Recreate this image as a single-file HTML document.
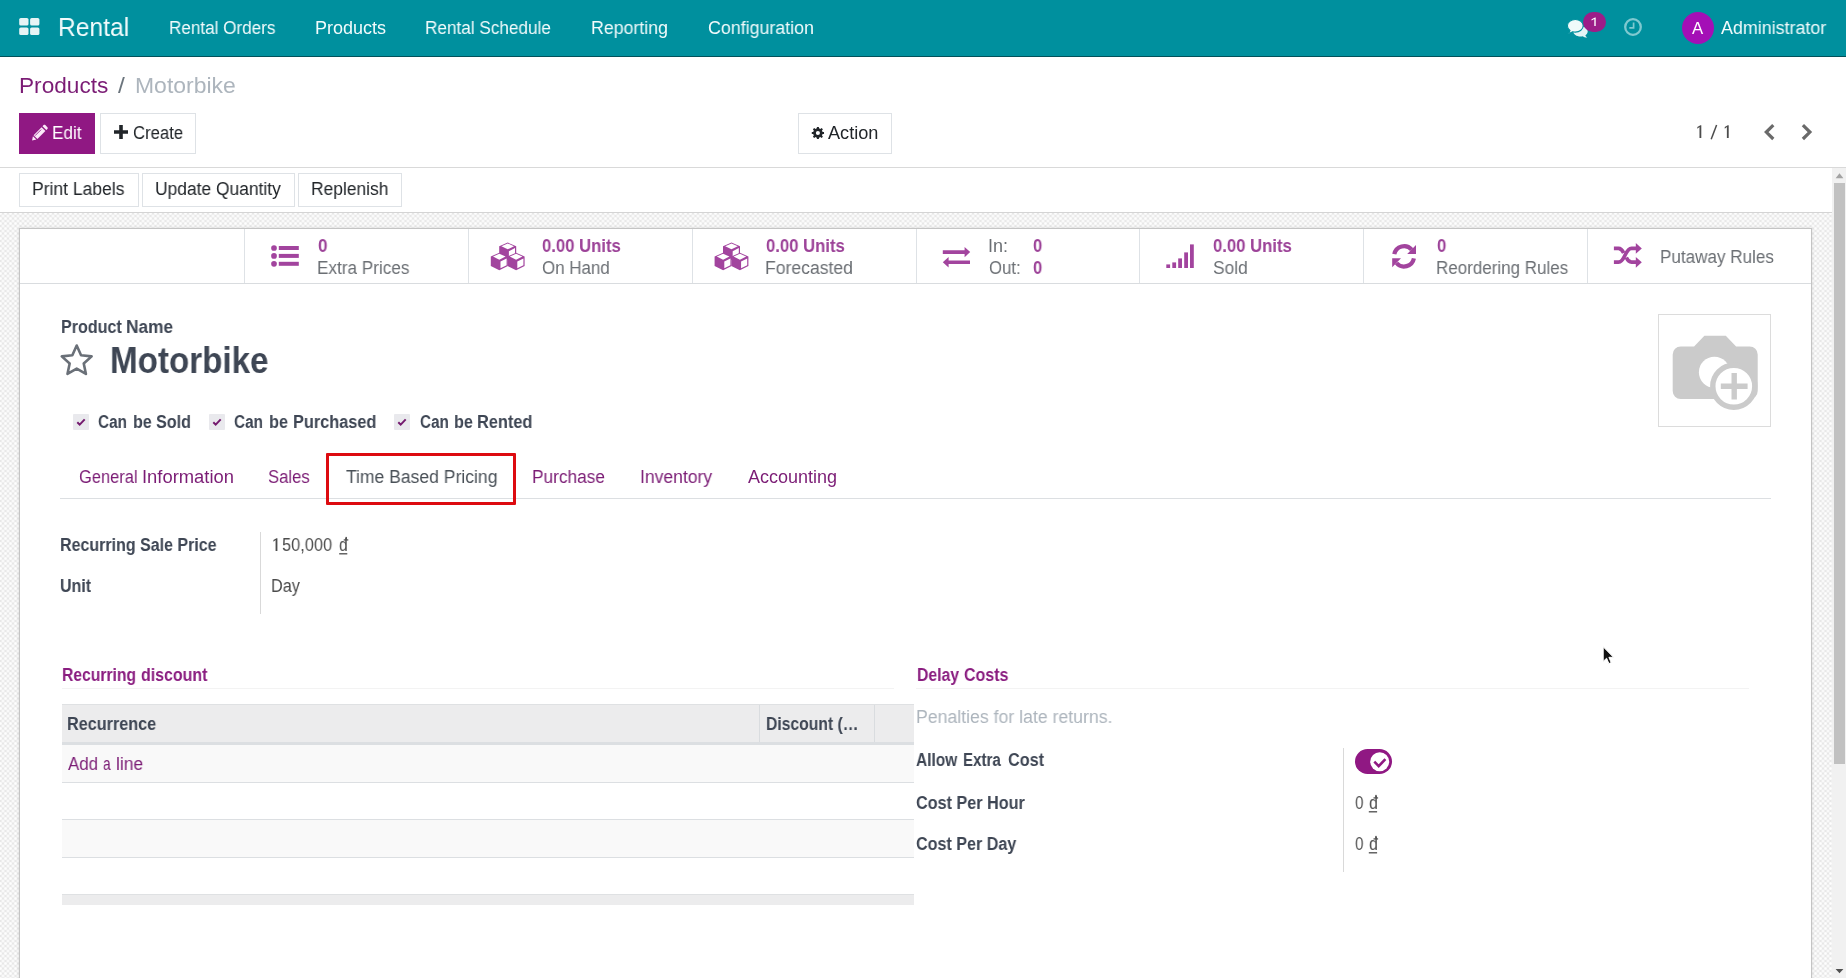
<!DOCTYPE html>
<html>
<head>
<meta charset="utf-8">
<title>Motorbike - Rental</title>
<style>
*{box-sizing:border-box;margin:0;padding:0}
html,body{width:1846px;height:978px;overflow:hidden;background:#fff}
body{font-family:"Liberation Sans",sans-serif;position:relative;font-size:18px;color:#4c4c4c}
.x{position:absolute;white-space:nowrap;line-height:1;transform-origin:0 0;will-change:transform}
.b{position:absolute}
svg{position:absolute;overflow:visible}
#nav{left:0;top:0;width:1846px;height:57px;background:#00909e;border-bottom:1px solid #01525b}
#cpb{left:0;top:167px;width:1846px;height:1px;background:#d9d9d9}
#sbb{left:0;top:212px;width:1832px;height:1px;background:#d4d4d4}
#bg{left:0;top:213px;width:1832px;height:765px;background-color:#e7e7e7;
background-image:radial-gradient(circle,#fefefe 0.8px,rgba(254,254,254,0) 2.1px),radial-gradient(circle,#fefefe 0.8px,rgba(254,254,254,0) 2.1px);
background-size:5px 5px;background-position:0.5px 0.5px,3px 3px}
#sheet{left:19px;top:228px;width:1793px;height:760px;background:#fff;border:1px solid #c4c4c4;box-shadow:0 0 3px rgba(0,0,0,.12)}
#scr{left:1832px;top:168px;width:14px;height:810px;background:#f1f1f1}
#scr i{position:absolute;left:2px;top:15px;width:11px;height:581px;background:#c1c1c1}
.btn{border:1px solid #dee2e6;background:#fff}
.hl{height:1px;background:#dee2e6}
.vl{width:1px;background:#dee2e6}
.cb{width:16px;height:16px;background:#e9e9ed;border-radius:1px}
.x u{text-decoration:underline;text-underline-offset:2px}
</style>
</head>
<body>
<div class="b" id="nav"></div>
<svg style="left:19px;top:18px" width="21" height="17" viewBox="0 0 21 17"><g fill="#e6f4f5"><rect x=".2" y="0" width="9.3" height="7.6" rx="1.6"/><rect x="11.1" y="0" width="9.3" height="7.6" rx="1.6"/><rect x=".2" y="9.4" width="9.3" height="7.6" rx="1.6"/><rect x="11.1" y="9.4" width="9.3" height="7.6" rx="1.6"/></g></svg>
<svg style="left:1566px;top:18px" width="24" height="20" viewBox="0 0 24 20"><g fill="#e3f5f6"><path d="M14.5 8.5c4 0 7.2 2.1 7.2 5 0 1.500-.9 2.8-2.300 3.700.2.900.9 1.800 1.900 2.300-1.900.1-3.500-.4-4.600-1.300-.7.1-1.400.2-2.200.2-4 0-7.200-2.200-7.200-5s3.200-4.900 7.200-4.900z"/></g><g fill="#f0fafa" stroke="#00909e" stroke-width="1.1"><path d="M9.300 1.500c4.400 0 7.900 2.800 7.900 6.300s-3.500 6.300-7.900 6.300c-.9 0-1.700-.1-2.500-.3-1.300 1-3 1.600-5.100 1.500 1.200-.7 2-1.700 2.300-2.800C2.400 11.400 1.400 9.700 1.400 7.800c0-3.500 3.500-6.300 7.900-6.300z"/></g></svg>
<div class="b" style="left:1583.400px;top:12px;width:22.300px;height:19.800px;border-radius:10px;background:#9c1d88"></div>
<svg style="left:1623px;top:17px" width="20" height="20" viewBox="0 0 20 20"><circle cx="10" cy="10" r="7.800" fill="none" stroke="#7fc9d0" stroke-width="2.300"/><path d="M10.600 5.500v5.400h-4.300" fill="none" stroke="#7fc9d0" stroke-width="1.700"/></svg>
<div class="b" style="left:1682px;top:12px;width:32px;height:32px;border-radius:50%;background:#a40fb6"></div>
<div class="b" id="cpb"></div>
<div class="b" style="left:19px;top:113px;width:76px;height:41px;background:#901883"></div>
<svg style="left:31.800px;top:125px" width="15.800" height="15.800" viewBox="0 0 17 17"><g fill="#fbe9f8"><path d="M11.300 1.300l1.200-1.200c.5-.5 1.300-.5 1.800 0l2.300 2.300c.5.500.5 1.300 0 1.800l-1.200 1.200z"/><path d="M10.300 2.300l4.100 4.100-8.600 8.600-4.100-4.100z"/><path d="M1 12l3.700 3.700-4.600 1z"/></g><path d="M3.300 11.500l6.600-6.600" stroke="#901883" stroke-width=".9" fill="none"/></svg>
<div class="b btn" style="left:100px;top:113px;width:96px;height:41px"></div>
<svg style="left:113.600px;top:125.200px" width="14" height="14" viewBox="0 0 14 14"><path d="M5.200 0h3.600v5.200H14v3.600H8.800V14H5.200V8.800H0V5.200h5.200z" fill="#212529"/></svg>
<div class="b btn" style="left:798px;top:113px;width:94px;height:41px"></div>
<svg style="left:0;top:0" width="1846" height="200" viewBox="0 0 1846 200"><path d="M824.02 132.03 L824.02 133.97 L822.57 134.12 L821.99 135.51 L822.92 136.64 L821.54 138.02 L820.41 137.09 L819.02 137.67 L818.87 139.12 L816.93 139.12 L816.78 137.67 L815.39 137.09 L814.26 138.02 L812.88 136.64 L813.81 135.51 L813.23 134.12 L811.78 133.97 L811.78 132.03 L813.23 131.88 L813.81 130.49 L812.88 129.36 L814.26 127.98 L815.39 128.91 L816.78 128.33 L816.93 126.88 L818.87 126.88 L819.02 128.33 L820.41 128.91 L821.54 127.98 L822.92 129.36 L821.99 130.49 L822.57 131.88Z M819.95 133.00 A2.05 2.05 0 1 0 815.85 133.00 A2.05 2.05 0 1 0 819.95 133.00Z" fill="#212529" fill-rule="evenodd"/></svg>
<svg style="left:1760px;top:120px" width="60" height="24" viewBox="1760 120 60 24"><g fill="none" stroke="#6a6a6a" stroke-width="3.200"><path d="M1773.300 125.200l-7 6.900 7 6.900"/><path d="M1802.900 125.200l7 6.900-7 6.900"/></g></svg>
<svg style="left:0;top:0" width="1846" height="160" viewBox="0 0 1846 160"><path d="M1701.30 138.00V125.20h-0.91l-3.05 1.900v1.57l2.14-1.550V138.00z" fill="#4c4c4c"/><path d="M1728.70 138.00V125.20h-0.91l-3.05 1.900v1.57l2.14-1.550V138.00z" fill="#4c4c4c"/><path d="M1711.200 139.300l5.400-14.400" stroke="#4c4c4c" stroke-width="1.500" fill="none"/><path d="M1595.70 26.00V17.40h-0.69l-3.45 1.900v1.19l2.76-1.550V26.00z" fill="#fff"/></svg>
<div class="b btn" style="left:19px;top:173px;width:120px;height:34px"></div>
<div class="b btn" style="left:142px;top:173px;width:153px;height:34px"></div>
<div class="b btn" style="left:298px;top:173px;width:104px;height:34px"></div>
<div class="b" id="sbb"></div>
<div class="b" id="bg"></div>
<div class="b" id="sheet"></div>
<div class="b" id="scr"><i></i></div>
<svg style="left:1832px;top:168px" width="14" height="810" viewBox="0 0 14 810"><path d="M3.600 10.300L7.500 5.200l3.900 5.100z" fill="#a3a3a3"/><path d="M3.600 801L7.500 805.200l3.900-4.200z" fill="#505050"/></svg>
<div class="b hl" style="left:20px;top:283px;width:1791px;background:#d9dcdf"></div>
<div class="b vl" style="left:244px;top:229px;height:54px"></div>
<div class="b vl" style="left:468px;top:229px;height:54px"></div>
<div class="b vl" style="left:692px;top:229px;height:54px"></div>
<div class="b vl" style="left:916px;top:229px;height:54px"></div>
<div class="b vl" style="left:1139px;top:229px;height:54px"></div>
<div class="b vl" style="left:1363px;top:229px;height:54px"></div>
<div class="b vl" style="left:1587px;top:229px;height:54px"></div>
<svg style="left:0;top:0" width="1846" height="300" viewBox="0 0 1846 300"><g fill="#a2449e"><circle cx="274" cy="248" r="2.850"/><rect x="278.800" y="246.0" width="20" height="4"/><circle cx="274" cy="255.9" r="2.850"/><rect x="278.800" y="253.9" width="20" height="4"/><circle cx="274" cy="263.8" r="2.850"/><rect x="278.800" y="261.8" width="20" height="4"/><path d="M507.70 242.50L516.20 246.15L516.20 255.65L507.70 259.90L499.20 255.65L499.20 246.15Z"/><path d="M507.70 243.49L513.99 246.19L507.70 249.35L501.41 246.19Z" fill="#fff"/><path d="M515.01 248.08L515.01 254.91L508.89 257.98L508.89 251.15Z" fill="#fff"/><path d="M499.30 252.80L507.80 256.45L507.80 265.95L499.30 270.20L490.80 265.95L490.80 256.45Z"/><path d="M499.30 253.79L505.59 256.49L499.30 259.65L493.01 256.49Z" fill="#fff"/><path d="M506.61 258.38L506.61 265.21L500.49 268.28L500.49 261.45Z" fill="#fff"/><path d="M516.10 252.80L524.60 256.45L524.60 265.95L516.10 270.20L507.60 265.95L507.60 256.45Z"/><path d="M516.10 253.79L522.39 256.49L516.10 259.65L509.81 256.49Z" fill="#fff"/><path d="M523.41 258.38L523.41 265.21L517.29 268.28L517.29 261.45Z" fill="#fff"/><path d="M731.50 242.50L740.00 246.15L740.00 255.65L731.50 259.90L723.00 255.65L723.00 246.15Z"/><path d="M731.50 243.49L737.79 246.19L731.50 249.35L725.21 246.19Z" fill="#fff"/><path d="M738.81 248.08L738.81 254.91L732.69 257.98L732.69 251.15Z" fill="#fff"/><path d="M723.10 252.80L731.60 256.45L731.60 265.95L723.10 270.20L714.60 265.95L714.60 256.45Z"/><path d="M723.10 253.79L729.39 256.49L723.10 259.65L716.81 256.49Z" fill="#fff"/><path d="M730.41 258.38L730.41 265.21L724.29 268.28L724.29 261.45Z" fill="#fff"/><path d="M739.90 252.80L748.40 256.45L748.40 265.95L739.90 270.20L731.40 265.95L731.40 256.45Z"/><path d="M739.90 253.79L746.19 256.49L739.90 259.65L733.61 256.49Z" fill="#fff"/><path d="M747.21 258.38L747.21 265.21L741.09 268.28L741.09 261.45Z" fill="#fff"/><path d="M942.800 250.200h21.800v-3.200l5.600 5.100-5.600 5.100v-3.300h-21.800z"/><path d="M970 260.400h-21.400v-3.300l-5.800 5.200 5.800 5.200v-3.400h21.400z"/><rect x="1166.3" y="264.4" width="3.800" height="3.6"/><rect x="1172.3" y="262.4" width="3.800" height="5.6"/><rect x="1178.2" y="258.4" width="3.800" height="9.6"/><rect x="1184.2" y="252.4" width="3.800" height="15.6"/><rect x="1190" y="244.4" width="3.800" height="23.6"/><g fill="none" stroke="#a2449e" stroke-width="4.200"><path d="M1394.300 254.200a10 10 0 0 1 17.400-4.600"/><path d="M1413.900 258.400a10 10 0 0 1-17.400 4.600"/></g><path d="M1416 245.100v9h-8.800z"/><path d="M1392.200 267.300v-9h8.800z"/><g fill="none" stroke="#a2449e" stroke-width="3.700"><path d="M1613.900 262.200h4.600c6.500 0 6.500-13.900 13-13.900h4.900"/><path d="M1613.900 248.300h4.600c2.600 0 4.100 2.200 5.200 4.600M1626.300 257.600c1.100 2.400 2.600 4.600 5.200 4.600h4.900"/></g><path d="M1635.800 243v10.800l6-5.400z"/><path d="M1635.800 256.900v10.800l6-5.400z"/></g></svg>
<svg style="left:0;top:300px" width="200" height="100" viewBox="0 300 200 100"><path d="M76.70 345.50L81.05 355.21L91.63 356.35L83.74 363.49L85.93 373.90L76.70 368.60L67.47 373.90L69.66 363.49L61.77 356.35L72.35 355.21Z" fill="none" stroke="#6a7078" stroke-width="2.600" stroke-linejoin="round"/></svg>
<div class="b" style="left:1658px;top:314px;width:113px;height:113px;border:1px solid #dcdcdc;background:#fff"></div>
<svg style="left:1658px;top:314px" width="113" height="113" viewBox="1658 314 113 113"><g fill="#cbcbcb"><path d="M1704.400 335.800h21.400l10.300 10.700h13.600a8 8 0 0 1 8 8v36.500a8 8 0 0 1-8 8h-69a8 8 0 0 1-8-8v-36.500a8 8 0 0 1 8-8h13.400z"/></g><circle cx="1714.400" cy="372.200" r="15.500" fill="#fff"/><circle cx="1733.800" cy="386.300" r="21" fill="#fff" stroke="#cbcbcb" stroke-width="5.400"/><path d="M1720.800 386.300h26.800M1734.200 373v26.600" stroke="#cbcbcb" stroke-width="5.400" fill="none"/></svg>
<div class="b cb" style="left:73px;top:414px"></div>
<svg style="left:73px;top:414px" width="16" height="16" viewBox="0 0 16 16"><path d="M4.300 8.200l2.400 2.400 5-5.200" fill="none" stroke="#751b6f" stroke-width="2"/></svg>
<div class="b cb" style="left:209px;top:414px"></div>
<svg style="left:209px;top:414px" width="16" height="16" viewBox="0 0 16 16"><path d="M4.300 8.200l2.400 2.400 5-5.200" fill="none" stroke="#751b6f" stroke-width="2"/></svg>
<div class="b cb" style="left:394.3px;top:414px"></div>
<svg style="left:394.3px;top:414px" width="16" height="16" viewBox="0 0 16 16"><path d="M4.300 8.200l2.400 2.400 5-5.200" fill="none" stroke="#751b6f" stroke-width="2"/></svg>
<div class="b hl" style="left:60px;top:498px;width:1711px;background:#dcdfe2"></div>
<div class="b" style="left:325.900px;top:453.300px;width:189.900px;height:51.700px;border:3px solid #dd0b10;border-radius:1px;background:transparent"></div>
<div class="b vl" style="left:260px;top:532px;height:82px;background:#d9d9d9"></div>
<div class="b vl" style="left:1343px;top:748px;height:124px;background:#d9d9d9"></div>
<div class="b hl" style="left:62px;top:688px;width:832px;background:#f3f3f3"></div>
<div class="b hl" style="left:916px;top:688px;width:833px;background:#f3f3f3"></div>
<div class="b" style="left:62px;top:704px;width:852px;height:38px;background:#ececed;border-top:1px solid #dfe1e3"></div>
<div class="b" style="left:62px;top:742px;width:852px;height:3px;background:#dcdfe2"></div>
<div class="b vl" style="left:759px;top:705px;height:37px;background:#d9dcdf"></div>
<div class="b vl" style="left:874px;top:705px;height:37px;background:#d9dcdf"></div>
<div class="b" style="left:62px;top:745px;width:852px;height:37px;background:#f9f9f9"></div>
<div class="b" style="left:62px;top:820px;width:852px;height:37px;background:#f9f9f9"></div>
<div class="b hl" style="left:62px;top:782px;width:852px;background:#dcdfe2"></div>
<div class="b hl" style="left:62px;top:819px;width:852px;background:#dcdfe2"></div>
<div class="b hl" style="left:62px;top:857px;width:852px;background:#dcdfe2"></div>
<div class="b" style="left:62px;top:894px;width:852px;height:11px;background:#ececed;border-top:1px solid #dfe1e3"></div>
<div class="b" style="left:1354.800px;top:748.800px;width:37.400px;height:25.200px;border-radius:13px;background:#901883"></div>
<svg style="left:1354.800px;top:748.800px" width="38" height="26" viewBox="0 0 38 26"><circle cx="24.700" cy="12.700" r="9.500" fill="#fff"/><path d="M19.300 12.700l4.400 4.400 6.700-6.900" fill="none" stroke="#901883" stroke-width="2.600"/></svg>
<svg style="left:0;top:0" width="1846" height="978" viewBox="0 0 1846 978"><path d="M277.40 551.00V538.20h-0.91l-3.05 1.900v1.57l2.14-1.550V551.00z" fill="#4c4c4c"/><rect x="345.45" y="536.90" width="1.450" height="2.600" fill="#4c4c4c"/><rect x="343.70" y="539.30" width="4.600" height="1.250" fill="#4c4c4c"/><rect x="339.20" y="553.15" width="8.10" height="1.300" fill="#4c4c4c"/><rect x="1375.25" y="794.90" width="1.450" height="2.600" fill="#4c4c4c"/><rect x="1373.50" y="797.30" width="4.600" height="1.250" fill="#4c4c4c"/><rect x="1368.80" y="811.15" width="8.30" height="1.300" fill="#4c4c4c"/><rect x="1375.25" y="835.90" width="1.450" height="2.600" fill="#4c4c4c"/><rect x="1373.50" y="838.30" width="4.600" height="1.250" fill="#4c4c4c"/><rect x="1368.80" y="852.15" width="8.30" height="1.300" fill="#4c4c4c"/></svg>
<svg style="left:1602px;top:646px" width="14" height="20" viewBox="0 0 14 20"><path d="M1.200 .8v14.600l3.400-3.200 2.300 5.400 2.300-1-2.300-5.300h4.600z" fill="#111" stroke="#fff" stroke-width="1"/></svg>
<!-- text layer -->
<div class="x" id="brand" style="left:57.91px;top:14px;font-size:26px;color:#f2fbfc;transform:scaleX(0.9464)">Rental</div>
<div class="x" id="m1" style="left:168.55px;top:19px;font-size:18px;color:#f2fbfc;transform:scaleX(0.9501)">Rental Orders</div>
<div class="x" id="m2" style="left:314.50px;top:19px;font-size:18px;color:#f2fbfc;transform:scaleX(0.9995)">Products</div>
<div class="x" id="m3" style="left:425.05px;top:19px;font-size:18px;color:#f2fbfc;transform:scaleX(0.9536)">Rental Schedule</div>
<div class="x" id="m4" style="left:591.01px;top:19px;font-size:18px;color:#f2fbfc;transform:scaleX(0.9864)">Reporting</div>
<div class="x" id="m5" style="left:707.50px;top:19px;font-size:18px;color:#f2fbfc;transform:scaleX(0.99)">Configuration</div>
<div class="x" id="avA" style="left:1692.10px;top:21px;font-size:16px;color:#fff;transform:scaleX(1.0455)">A</div>
<div class="x" id="admin" style="left:1721.00px;top:19px;font-size:18px;color:#f2fbfc;transform:scaleX(0.993)">Administrator</div>
<div class="x" id="bc1" style="left:19.07px;top:75px;font-size:22px;color:#7b1c75;transform:scaleX(1.0289)">Products</div>
<div class="x" id="bc2" style="left:117.90px;top:75px;font-size:22px;color:#6c757d;transform:scaleX(1.1143)">/</div>
<div class="x" id="bc3" style="left:134.76px;top:75px;font-size:22px;color:#adb5bd;transform:scaleX(1.0434)">Motorbike</div>
<div class="x" id="bEdit" style="left:51.65px;top:124px;font-size:18px;color:#fff;transform:scaleX(0.9528)">Edit</div>
<div class="x" id="bCreate" style="left:132.50px;top:124px;font-size:18px;color:#212529;transform:scaleX(0.9275)">Create</div>
<div class="x" id="bAction" style="left:828.10px;top:124px;font-size:18px;color:#212529;transform:scaleX(1.0078)">Action</div>
<div class="x" id="bPrint" style="left:32.13px;top:180px;font-size:18px;color:#212529;transform:scaleX(0.9728)">Print Labels</div>
<div class="x" id="bUpd" style="left:155.23px;top:180px;font-size:18px;color:#212529;transform:scaleX(0.9676)">Update Quantity</div>
<div class="x" id="bRep" style="left:311.23px;top:180px;font-size:18px;color:#212529;transform:scaleX(0.9675)">Replenish</div>
<div class="x" id="s1v" style="left:317.50px;top:237px;font-size:18px;color:#9c4298;font-weight:bold;transform:scaleX(0.95)">0</div>
<div class="x" id="s1l" style="left:316.55px;top:259px;font-size:18px;color:#6b6f74;transform:scaleX(0.9529)">Extra Prices</div>
<div class="x" id="s2v" style="left:541.50px;top:237px;font-size:18px;color:#9c4298;font-weight:bold;transform:scaleX(0.9268)">0.00 Units</div>
<div class="x" id="s2l" style="left:541.50px;top:259px;font-size:18px;color:#6b6f74;transform:scaleX(0.9404)">On Hand</div>
<div class="x" id="s3v" style="left:765.50px;top:237px;font-size:18px;color:#9c4298;font-weight:bold;transform:scaleX(0.9268)">0.00 Units</div>
<div class="x" id="s3l" style="left:764.52px;top:259px;font-size:18px;color:#6b6f74;transform:scaleX(0.9769)">Forecasted</div>
<div class="x" id="s4a" style="left:988.32px;top:237px;font-size:18px;color:#6b6f74;transform:scaleX(0.9827)">In:</div>
<div class="x" id="s4av" style="left:1033.30px;top:237px;font-size:18px;color:#9c4298;font-weight:bold;transform:scaleX(0.92)">0</div>
<div class="x" id="s4b" style="left:989.30px;top:259px;font-size:18px;color:#6b6f74;transform:scaleX(0.9299)">Out:</div>
<div class="x" id="s4bv" style="left:1033.30px;top:259px;font-size:18px;color:#9c4298;font-weight:bold;transform:scaleX(0.92)">0</div>
<div class="x" id="s5v" style="left:1212.50px;top:237px;font-size:18px;color:#9c4298;font-weight:bold;transform:scaleX(0.9268)">0.00 Units</div>
<div class="x" id="s5l" style="left:1212.50px;top:259px;font-size:18px;color:#6b6f74;transform:scaleX(0.9653)">Sold</div>
<div class="x" id="s6v" style="left:1437.00px;top:237px;font-size:18px;color:#9c4298;font-weight:bold;transform:scaleX(0.93)">0</div>
<div class="x" id="s6l" style="left:1436.06px;top:259px;font-size:18px;color:#6b6f74;transform:scaleX(0.9441)">Reordering Rules</div>
<div class="x" id="s7l" style="left:1659.85px;top:248px;font-size:18px;color:#6b6f74;transform:scaleX(0.9491)">Putaway Rules</div>
<div class="x" id="pna" style="left:60.71px;top:318px;font-size:18px;color:#3e4654;font-weight:bold;transform:scaleX(0.8939)">Product</div>
<div class="x" id="pnb" style="left:126.14px;top:318px;font-size:18px;color:#3e4654;font-weight:bold;transform:scaleX(0.9601)">Name</div>
<div class="x" id="h1" style="left:109.86px;top:343px;font-size:36px;color:#3e4654;font-weight:bold;transform:scaleX(0.9214)">Motorbike</div>
<div class="x" id="c1a" style="left:98.00px;top:413px;font-size:18px;color:#3e4654;font-weight:bold;transform:scaleX(0.8513)">Can</div>
<div class="x" id="c1b" style="left:133.01px;top:413px;font-size:18px;color:#3e4654;font-weight:bold;transform:scaleX(0.8902)">be</div>
<div class="x" id="c1c" style="left:156.30px;top:413px;font-size:18px;color:#3e4654;font-weight:bold;transform:scaleX(0.8973)">Sold</div>
<div class="x" id="c2a" style="left:234.30px;top:413px;font-size:18px;color:#3e4654;font-weight:bold;transform:scaleX(0.8513)">Can</div>
<div class="x" id="c2b" style="left:268.99px;top:413px;font-size:18px;color:#3e4654;font-weight:bold;transform:scaleX(0.9052)">be</div>
<div class="x" id="c2c" style="left:292.69px;top:413px;font-size:18px;color:#3e4654;font-weight:bold;transform:scaleX(0.9062)">Purchased</div>
<div class="x" id="c3a" style="left:419.60px;top:413px;font-size:18px;color:#3e4654;font-weight:bold;transform:scaleX(0.8482)">Can</div>
<div class="x" id="c3b" style="left:454.30px;top:413px;font-size:18px;color:#3e4654;font-weight:bold;transform:scaleX(0.9002)">be</div>
<div class="x" id="c3c" style="left:477.49px;top:413px;font-size:18px;color:#3e4654;font-weight:bold;transform:scaleX(0.9083)">Rented</div>
<div class="x" id="t1a" style="left:78.60px;top:468px;font-size:18px;color:#7b1c75;transform:scaleX(0.9153)">General</div>
<div class="x" id="t1b" style="left:141.68px;top:468px;font-size:18px;color:#7b1c75;transform:scaleX(1.0212)">Information</div>
<div class="x" id="t2" style="left:268.30px;top:468px;font-size:18px;color:#7b1c75;transform:scaleX(0.9261)">Sales</div>
<div class="x" id="t3" style="left:346.30px;top:468px;font-size:18px;color:#495057;transform:scaleX(0.9749)">Time Based Pricing</div>
<div class="x" id="t4" style="left:532.04px;top:468px;font-size:18px;color:#7b1c75;transform:scaleX(0.9596)">Purchase</div>
<div class="x" id="t5" style="left:640.33px;top:468px;font-size:18px;color:#7b1c75;transform:scaleX(0.9748)">Inventory</div>
<div class="x" id="t6" style="left:748.00px;top:468px;font-size:18px;color:#7b1c75;transform:scaleX(0.9972)">Accounting</div>
<div class="x" id="f1l" style="left:60.41px;top:536px;font-size:18px;color:#3e4654;font-weight:bold;transform:scaleX(0.8894)">Recurring Sale Price</div>
<div class="x" id="f1va" style="left:282.30px;top:536px;font-size:18px;color:#4c4c4c;transform:scaleX(0.912)">50,000</div>
<div class="x" id="f1vb" style="left:339.20px;top:536px;font-size:18px;color:#4c4c4c;transform:scaleX(0.8667)">d</div>
<div class="x" id="f2l" style="left:60.41px;top:577px;font-size:18px;color:#3e4654;font-weight:bold;transform:scaleX(0.8884)">Unit</div>
<div class="x" id="f2v" style="left:270.60px;top:577px;font-size:18px;color:#4c4c4c;transform:scaleX(0.9029)">Day</div>
<div class="x" id="g1a" style="left:61.93px;top:666px;font-size:18px;color:#8a1d80;font-weight:bold;transform:scaleX(0.8709)">Recurring</div>
<div class="x" id="g1b" style="left:141.10px;top:666px;font-size:18px;color:#8a1d80;font-weight:bold;transform:scaleX(0.8853)">discount</div>
<div class="x" id="g2a" style="left:916.62px;top:666px;font-size:18px;color:#8a1d80;font-weight:bold;transform:scaleX(0.8762)">Delay</div>
<div class="x" id="g2b" style="left:964.30px;top:666px;font-size:18px;color:#8a1d80;font-weight:bold;transform:scaleX(0.888)">Costs</div>
<div class="x" id="th1" style="left:67.10px;top:715px;font-size:18px;color:#3e4654;font-weight:bold;transform:scaleX(0.9006)">Recurrence</div>
<div class="x" id="th2" style="left:765.63px;top:715px;font-size:18px;color:#3e4654;font-weight:bold;transform:scaleX(0.8719)">Discount (…</div>
<div class="x" id="adda" style="left:67.50px;top:755px;font-size:18px;color:#7b1c75;transform:scaleX(0.9382)">Add</div>
<div class="x" id="addb" style="left:102.50px;top:755px;font-size:18px;color:#7b1c75;transform:scaleX(0.7636)">a</div>
<div class="x" id="addc" style="left:115.93px;top:755px;font-size:18px;color:#7b1c75;transform:scaleX(0.9701)">line</div>
<div class="x" id="pen" style="left:916.42px;top:708px;font-size:18px;color:#adb5bd;transform:scaleX(0.9823)">Penalties for late returns.</div>
<div class="x" id="d1a" style="left:916.30px;top:751px;font-size:18px;color:#3e4654;font-weight:bold;transform:scaleX(0.8593)">Allow</div>
<div class="x" id="d1b" style="left:963.46px;top:751px;font-size:18px;color:#3e4654;font-weight:bold;transform:scaleX(0.8397)">Extra</div>
<div class="x" id="d1c" style="left:1007.60px;top:751px;font-size:18px;color:#3e4654;font-weight:bold;transform:scaleX(0.9024)">Cost</div>
<div class="x" id="d2" style="left:916.00px;top:794px;font-size:18px;color:#3e4654;font-weight:bold;transform:scaleX(0.8991)">Cost Per Hour</div>
<div class="x" id="d3" style="left:916.00px;top:835px;font-size:18px;color:#3e4654;font-weight:bold;transform:scaleX(0.8953)">Cost Per Day</div>
<div class="x" id="d2va" style="left:1354.60px;top:794px;font-size:18px;color:#4c4c4c;transform:scaleX(0.84)">0</div>
<div class="x" id="d2vb" style="left:1368.80px;top:794px;font-size:18px;color:#4c4c4c;transform:scaleX(0.8889)">d</div>
<div class="x" id="d3va" style="left:1354.60px;top:835px;font-size:18px;color:#4c4c4c;transform:scaleX(0.84)">0</div>
<div class="x" id="d3vb" style="left:1368.80px;top:835px;font-size:18px;color:#4c4c4c;transform:scaleX(0.8889)">d</div>
</body>
</html>
